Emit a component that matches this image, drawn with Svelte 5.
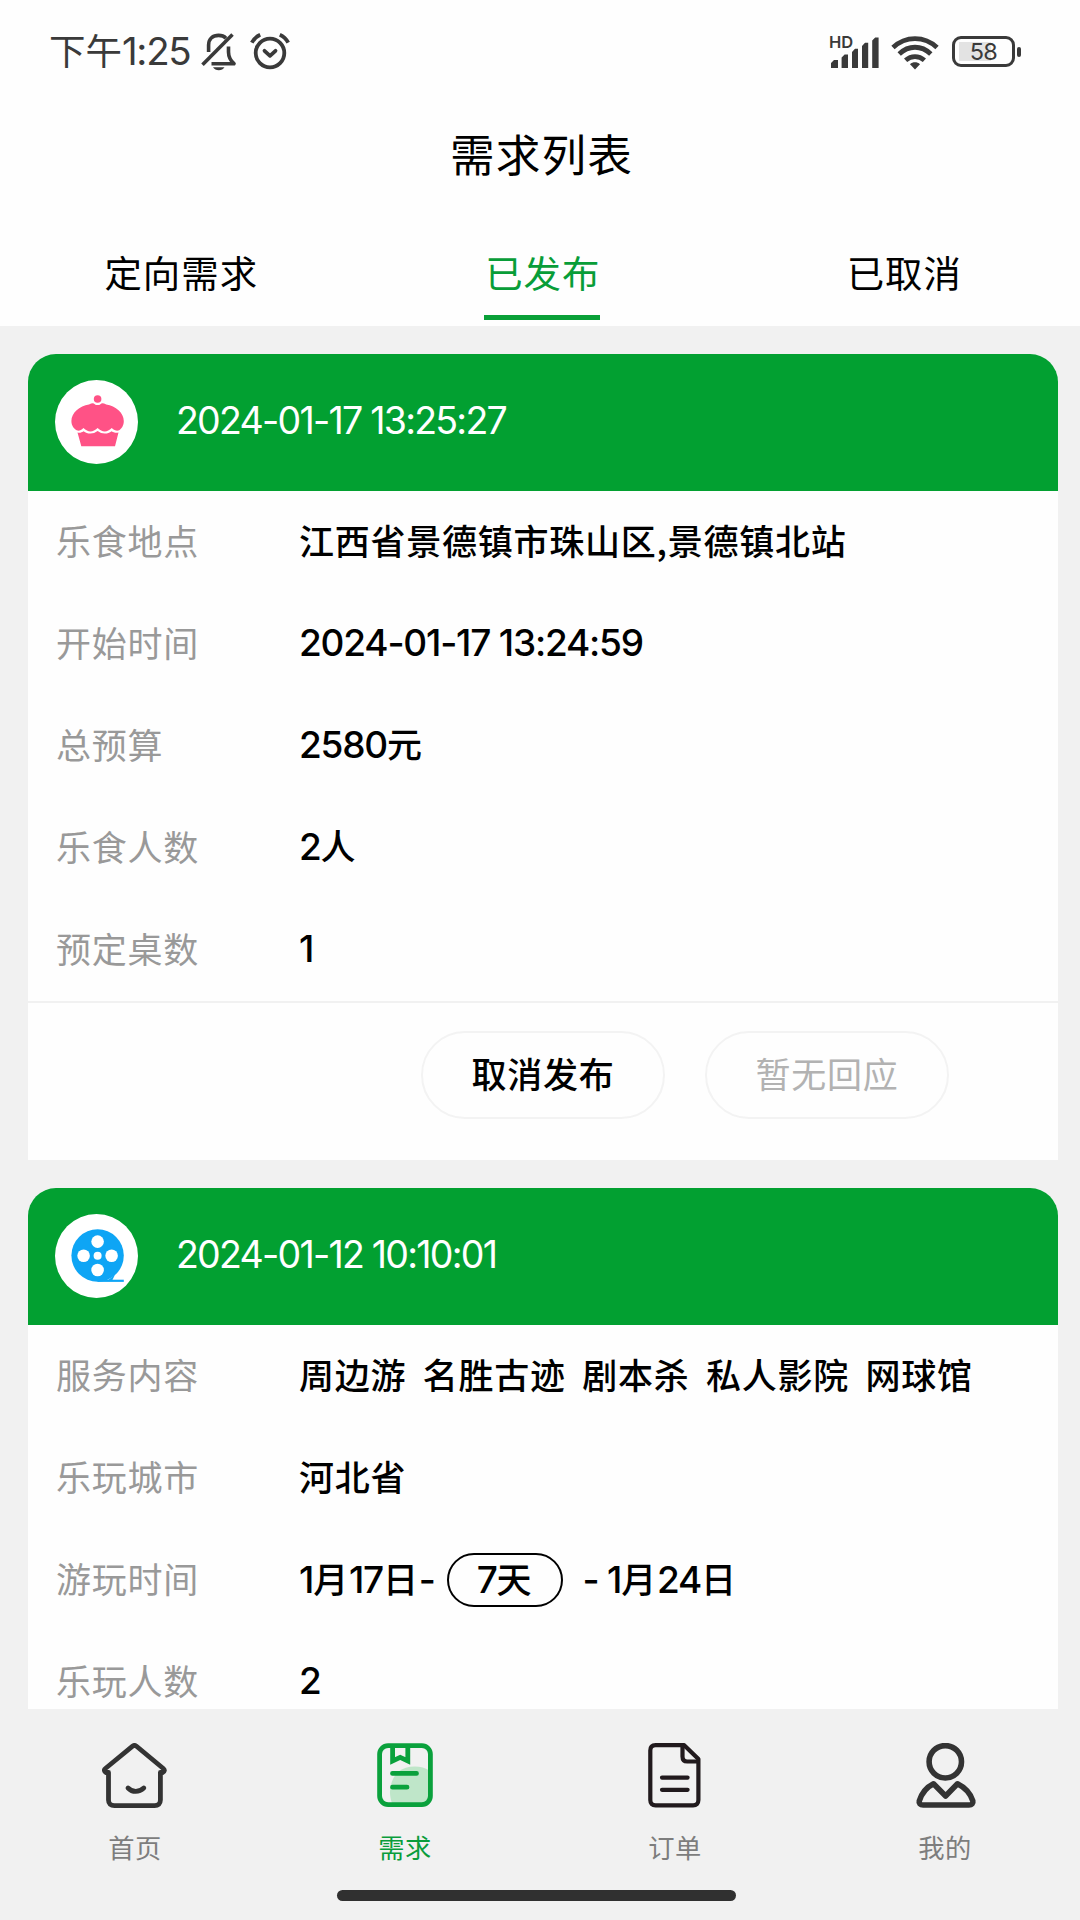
<script>
  const tabs = ['定向需求', '已发布', '已取消'];
  let active = $state(1);

  const orders = [
    {
      kind: 'food',
      created: '2024-01-17 13:25:27',
      rows: [
        { label: '乐食地点', value: '江西省景德镇市珠山区,景德镇北站' },
        { label: '开始时间', value: '2024-01-17 13:24:59' },
        { label: '总预算', value: '2580元' },
        { label: '乐食人数', value: '2人' },
        { label: '预定桌数', value: '1' }
      ],
      actions: true
    },
    {
      kind: 'film',
      created: '2024-01-12 10:10:01',
      rows: [
        { label: '服务内容', items: ['周边游', '名胜古迹', '剧本杀', '私人影院', '网球馆'] },
        { label: '乐玩城市', value: '河北省' },
        { label: '游玩时间', from: '1月17日-', days: '7天', to: '- 1月24日' },
        { label: '乐玩人数', value: '2' }
      ]
    }
  ];

  const nav = [
    { id: 'home', label: '首页' },
    { id: 'demand', label: '需求', on: true },
    { id: 'order', label: '订单' },
    { id: 'mine', label: '我的' }
  ];

  // Separates digit runs from Chinese text so each gets its own tracking.
  const runs = (text) => text.match(/[0-9:\- ]+|[^0-9:\- ]+/g) ?? [];
  const isNumeric = (run) => /^[0-9:\- ]/.test(run);
</script>

{#snippet mixed(text)}{#each runs(text) as run}<span class:num={isNumeric(run)}>{run}</span>{/each}{/snippet}

<div class="screen">
  <header class="top">
    <div class="status">
      <span class="clock">下午<span class="time">1:25</span></span>
      <svg class="bell" width="38" height="40" viewBox="0 0 38 40" fill="none" stroke="#3a3a3a" stroke-width="3.6">
        <path d="M8.6 20V13C8.6 6.5 13 3.4 18.6 3.4c3 0 5.6 1 7.4 2.8" />
        <path d="M28.5 14.500V20c0 4 2 8.500 5.500 11.700H11.500" stroke-linejoin="round" />
        <path d="M32.500 2.500 2.500 32.800" />
        <path d="M13 35.200h11.500c-1.200 2-3.200 3-5.700 3s-4.600-1-5.800-3z" fill="#3a3a3a" stroke="none" />
      </svg>
      <svg class="alarm" width="40" height="40" viewBox="0 0 40 40" fill="none" stroke="#3a3a3a" stroke-width="3.8">
        <circle cx="20" cy="21" r="14.300" />
        <path d="M14.500 18.800l5.500 5 5.500-5" stroke-linecap="round" stroke-linejoin="round" />
        <path d="M1.800 10.700C3.800 7 6.600 4.400 10.200 2.800M38.200 10.700C36.200 7 33.400 4.400 29.800 2.800" />
      </svg>
      <div class="network">
        <span class="hd">HD</span>
        <svg width="52" height="34" viewBox="0 0 52 34" fill="#3a3a3a">
          <path d="M2 33V28l3-3h4v8zM12.600 33V22.500l3-3h3.400V33zM23 33V17l3-3.200h3V33zM33 33V11l3-3.200h3.200V33zM43.200 33V5.600l3-3h3.400V33z" />
        </svg>
      </div>
      <svg class="wifi" width="48" height="36" viewBox="0 0 48 36" fill="none" stroke="#3a3a3a" stroke-width="4.800">
        <path d="M2 13.500C14.500 1.600 33.500 1.600 46 13.500" />
        <path d="M8.200 20C17.500 11 30.500 11 39.800 20" />
        <path d="M14.600 26.300c5.600-5 13.200-5 18.800 0" />
        <path d="M19 30.200c2.800-2.600 7.200-2.600 10 0L24 35.400z" fill="#3a3a3a" stroke="none" />
      </svg>
      <div class="battery"><span class="level">58</span><i></i></div>
    </div>
    <h1>需求列表</h1>
    <nav class="tabs">
      {#each tabs as tab, i}
        <button class="tab" class:active={i === active} onclick={() => (active = i)}><span>{tab}</span></button>
      {/each}
    </nav>
  </header>

  <main class="list">
    {#each orders as order}
      <article class="card">
        <div class="head">
          {#if order.kind === 'food'}
            <svg width="83" height="84" viewBox="0 0 83 84">
              <ellipse cx="41.500" cy="42" rx="41.500" ry="42" fill="#fff" />
              <circle cx="42.600" cy="19" r="3.800" fill="#ff5286" />
              <path fill="#ff5286" d="M34 24.500c2.500-1.200 4.500-1.600 5.500-.6 1.500 1.600 4.700 1.600 6.200 0 1-1 3-.6 5.500.6 9.500 1.400 17.600 8.400 17.600 16.500 0 4.500-2.200 8-5.300 9.600-2.500.4-4.500-.6-6.700-2.600-2.600 2.200-4.600 3.400-7 3.400-2.600 0-4.600-1.200-7.200-3.400-2.600 2.200-4.600 3.400-7.200 3.400-2.400 0-4.400-1.200-7-3.400-2.200 2-3.800 3-6 2.600-3.600-1.600-6-5.100-6-9.600 0-8.100 8.100-15.100 17.600-16.500z" />
              <path fill="#ff5286" d="M22.500 52.500c2.400.6 4.200 0 6-1.300 2.200 1.600 4.200 2.400 6.900 2.400 2.800 0 4.800-.8 7.200-2.500 2.400 1.700 4.400 2.500 7.200 2.500 2.700 0 4.700-.8 6.900-2.400 1.800 1.300 4 1.900 6.800 1.300L60 66.200H26.300z" />
            </svg>
          {:else}
            <svg width="83" height="84" viewBox="0 0 83 84">
              <ellipse cx="41.500" cy="42" rx="41.500" ry="42" fill="#fff" />
              <circle cx="42.600" cy="41.500" r="26.200" fill="#0ea5f5" />
              <path d="M42.600 66.800h26.200" stroke="#0ea5f5" stroke-width="2.200" />
              <path d="M52 66.800l8-6-3 6z" fill="#0ea5f5" />
              <g fill="#fff">
                <circle cx="42.600" cy="27.600" r="6.300" />
                <circle cx="28.600" cy="41.800" r="6.300" />
                <circle cx="56.600" cy="41.800" r="6.300" />
                <circle cx="42.600" cy="56" r="6.300" />
                <circle cx="42.600" cy="41.800" r="4" />
              </g>
            </svg>
          {/if}
          <time>{order.created}</time>
        </div>

        <dl>
          {#each order.rows as row}
            <div class="row">
              <dt>{row.label}</dt>
              {#if row.items}
                <dd class="items">
                  {#each row.items as item}<span>{item}</span>{/each}
                </dd>
              {:else if row.days}
                <dd class="range">
                  <div class="from">{@render mixed(row.from)}</div>
                  <div class="days">{@render mixed(row.days)}</div>
                  <div class="to">{@render mixed(row.to)}</div>
                </dd>
              {:else}
                <dd>{@render mixed(row.value)}</dd>
              {/if}
            </div>
          {/each}
        </dl>

        {#if order.actions}
          <footer>
            <button class="action">取消发布</button>
            <button class="action muted" disabled>暂无回应</button>
          </footer>
        {/if}
      </article>
    {/each}
  </main>

  <nav class="bottom">
    {#each nav as item}
      <a class="nav-item" class:on={item.on} href="#{item.id}">
        <svg width="66" height="66" viewBox="0 0 66 66" fill="none" stroke-linecap="round" stroke-linejoin="round">
          {#if item.id === 'home'}
            <g stroke="#333" stroke-width="4.800">
              <path d="M6.500 29.500H4c-2-1-2.200-2.700-.6-4L30.300 3.300c1.500-1.200 2.800-1.200 4.200 0L61.300 25.500c1.600 1.300 1.400 3-.7 4H58.400V57c0 3.600-2.200 5.600-5.800 5.600H12.400c-3.600 0-5.900-2-5.900-5.600z" />
              <path d="M26 45c4.400 4.600 11 4.600 15.800 0" />
            </g>
          {:else if item.id === 'demand'}
            <path d="M20 60C16 50 18 37 26 29c9-7 23-7 32-1v25c0 5-3 8-7 8z" fill="#bfe6c9" />
            <g stroke="#0aa13c" stroke-width="4.800">
              <rect x="7.600" y="2.600" width="50.800" height="59" rx="8.500" />
              <path d="M20.600 4v14l7.600-3.600 7.600 3.600V4" stroke-linejoin="miter" />
              <path d="M20.500 30.400h24M20.500 44.200h14.500" />
            </g>
          {:else if item.id === 'order'}
            <g stroke="#211a1d" stroke-width="4.200">
              <path d="M13.600 2.200h28.600L56.400 16v41c0 3.300-2 5.400-5.300 5.400H13.600c-3.400 0-5.300-2.100-5.300-5.400V7.600c0-3.400 1.900-5.400 5.300-5.400z" />
              <path d="M40.500 3v10.500c0 3.200 1.600 5 4.800 5h10" />
              <path d="M20 34.600h25.600M20 46.800h25.600" />
            </g>
          {:else}
            <g stroke="#333" stroke-width="5.600">
              <circle cx="33.300" cy="18.800" r="16.200" />
              <path d="M21.500 40.800L33.600 53 45.500 40.800c7 3.500 13 10 15.300 17 .6 2.700-1 4.200-3.800 4.200H11.200c-3 0-4.600-1.500-3.900-4.200 2.300-7 7.200-13.500 14.200-17z" />
            </g>
          {/if}
        </svg>
        <span>{item.label}</span>
      </a>
    {/each}
  </nav>
  <div class="gesture"><i></i></div>
</div>

<style>
  :global(body) {
    background: #f1f1f1;
  }

  .screen {
    width: 1080px;
    height: 1920px;
    display: flex;
    flex-direction: column;
    overflow: hidden;
    background: #f1f1f1;
    color: #000;
    font-family: 'Noto Sans CJK SC', 'Noto Sans', sans-serif;
  }

  h1,
  dl,
  dd {
    margin: 0;
  }

  button {
    font: inherit;
    padding: 0;
    border: 0;
    background: none;
    color: inherit;
  }

  .top {
    height: 325.500px;
    flex: none;
    background: #fefefe;
  }

  .status {
    display: flex;
    align-items: center;
    height: 103px;
    box-sizing: border-box;
    padding: 0 58px 0 49px;
    color: #3a3a3a;
  }

  .clock {
    width: 151px;
    font-size: 36.500px;
    line-height: 54px;
    white-space: nowrap;
    padding-bottom: 3px;
  }

  .time {
    font-family: Inter, sans-serif;
    font-size: 38.500px;
    letter-spacing: -1.300px;
  }

  .alarm {
    margin-left: 12px;
  }

  .network {
    display: grid;
    margin-left: auto;
    margin-right: 1px;
  }

  .network > * {
    grid-area: 1 / 1;
  }

  .hd {
    font: 600 16.500px/18px Inter, sans-serif;
    margin-top: -2px;
    height: 18px;
  }

  .wifi {
    margin-left: 9px;
  }

  .battery {
    display: flex;
    align-items: center;
    gap: 2px;
    width: 70px;
    margin-left: 13px;
  }

  .level {
    width: 63px;
    height: 31px;
    box-sizing: border-box;
    border: 3px solid #3a3a3a;
    border-radius: 9px;
    background: linear-gradient(#e3e3e3, #e3e3e3) 4px 50% / 32px 19px no-repeat;
    font: 400 23.500px/25px Inter, sans-serif;
    letter-spacing: -0.600px;
    text-align: center;
  }

  .battery i {
    width: 4px;
    height: 10px;
    border-radius: 2px;
    background: #3a3a3a;
  }

  h1 {
    height: 104px;
    font-size: 44.600px;
    letter-spacing: 1.200px;
    font-weight: 400;
    line-height: 99px;
    text-align: center;
    padding-left: 3px;
  }

  .tabs {
    display: grid;
    grid-template-columns: repeat(3, 361.500px);
  }

  .tab {
    display: flex;
    justify-content: center;
    height: 114px;
    font-size: 37.400px;
    letter-spacing: 1px;
    line-height: 56px;
  }

  .tab span {
    height: 71px;
    padding: 37px 0 0 1px;
    border-bottom: 5.500px solid transparent;
  }

  .active {
    color: #089d38;
  }

  .active span {
    border-color: #0aa038;
  }

  .list {
    flex: none;
    height: 1383.500px;
    box-sizing: border-box;
    overflow: hidden;
    padding: 28px 22px 0 28px;
  }

  .card {
    margin-bottom: 28px;
    border-radius: 28px 28px 0 0;
    overflow: hidden;
    background: #fefefe;
  }

  .head {
    display: flex;
    align-items: center;
    gap: 38px;
    height: 137px;
    box-sizing: border-box;
    padding-left: 27px;
    background: #02a031;
    color: #fff;
  }

  time {
    font-family: Inter, sans-serif;
    font-size: 37.500px;
    line-height: 50px;
    letter-spacing: -1.750px;
    padding-bottom: 3px;
  }

  .row {
    display: flex;
    align-items: center;
    height: 102.100px;
    padding-left: 28px;
    font-size: 35px;
    letter-spacing: 0.750px;
    line-height: 52px;
    white-space: pre;
  }

  dt,
  dd {
    padding-bottom: 4px;
  }

  dt {
    width: 243px;
    color: #999;
  }

  dd {
    font-weight: 500;
  }

  .num {
    font-family: Inter, sans-serif;
    font-size: 37px;
    letter-spacing: -1.200px;
  }

  .items {
    display: flex;
    gap: 16.500px;
  }

  .range {
    display: flex;
    align-items: center;
    padding-bottom: 0;
  }

  .from {
    width: 147.500px;
    padding-bottom: 3px;
  }

  .days {
    width: 116px;
    height: 54px;
    box-sizing: border-box;
    border: 2px solid #000;
    border-radius: 27px;
    line-height: 46px;
    text-align: center;
  }

  .to {
    margin-left: 20px;
    padding-bottom: 3px;
  }

  footer {
    display: flex;
    gap: 40px;
    height: 159px;
    box-sizing: border-box;
    justify-content: flex-end;
    padding: 28px 109px 0 0;
    border-top: 2px solid #f1f1f1;
  }

  .action {
    width: 244px;
    height: 88px;
    border: 2px solid #f3f3f3;
    border-radius: 44px;
    font-size: 35px;
    letter-spacing: 0.750px;
    font-weight: 500;
    padding-bottom: 5px;
  }

  .muted {
    color: #b2b2b2;
    font-weight: 400;
  }

  .bottom {
    display: grid;
    grid-template-columns: repeat(4, 1fr);
    height: 181px;
    flex: none;
    box-sizing: border-box;
    padding-top: 33.500px;
  }

  .nav-item {
    display: flex;
    flex-direction: column;
    align-items: center;
    color: #7d7d7d;
    font-size: 26.300px;
    letter-spacing: 0.400px;
    line-height: 40px;
    text-decoration: none;
  }

  .nav-item span {
    margin-top: 18px;
  }

  .on {
    color: #0a9d3c;
  }

  .gesture {
    display: flex;
    justify-content: center;
    padding-right: 7px;
  }

  .gesture i {
    width: 399px;
    height: 11px;
    border-radius: 6px;
    background: #303030;
  }
</style>
